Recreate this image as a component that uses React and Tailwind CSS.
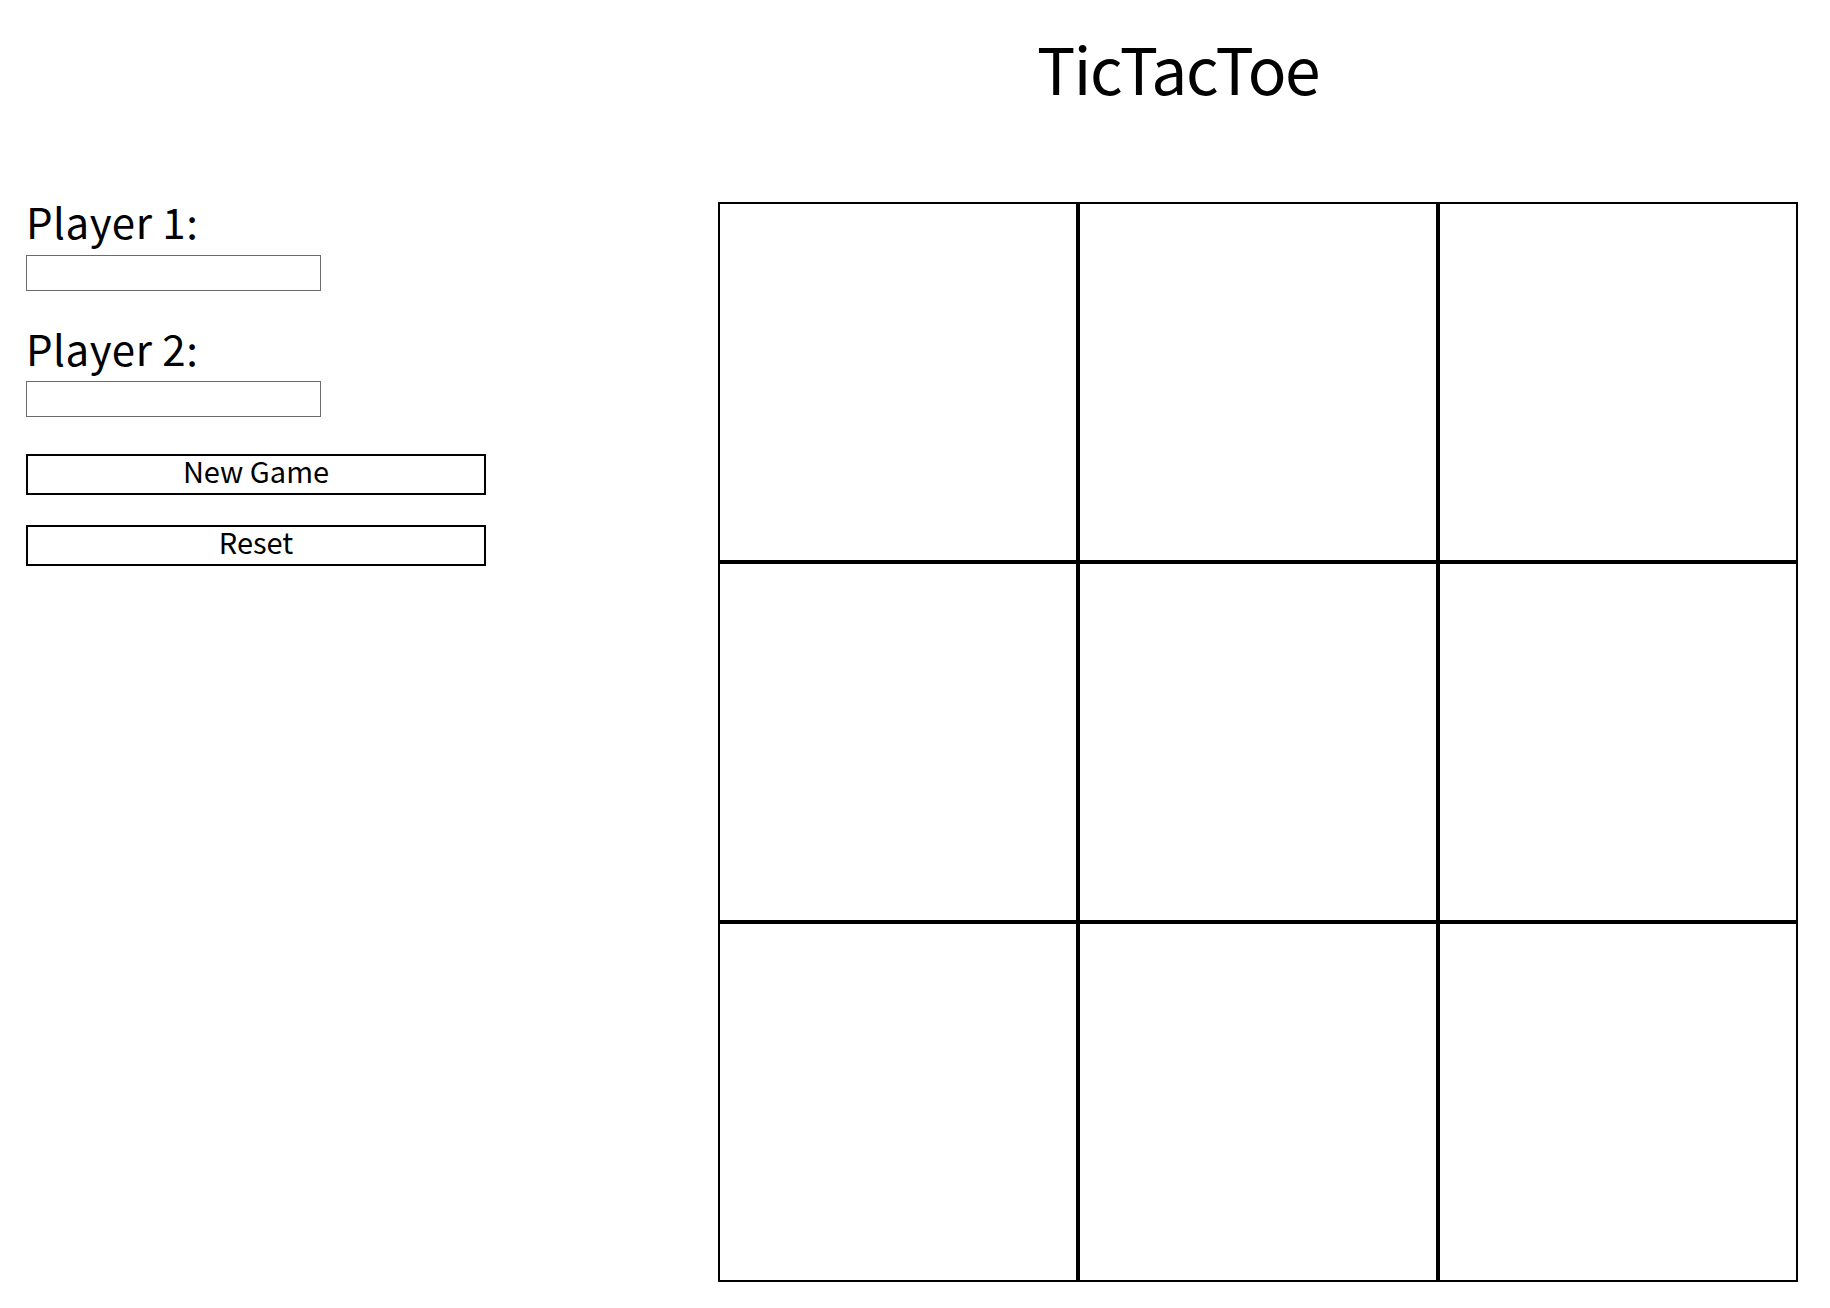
import React, { useState } from 'react';

const font = { fontFamily: '"Noto Sans CJK JP", "DejaVu Sans", sans-serif' };

const Cell = ({ value, onClick }) => (
  <button
    onClick={onClick}
    className="w-[360px] h-[360px] border-2 border-black bg-white text-[200px] leading-none flex items-center justify-center"
  >
    {value}
  </button>
);

const App = () => {
  const [p1, setP1] = useState('');
  const [p2, setP2] = useState('');
  const [cells, setCells] = useState(Array(9).fill(''));
  const [turn, setTurn] = useState('X');

  const play = (i) => {
    if (cells[i]) return;
    const next = [...cells];
    next[i] = turn;
    setCells(next);
    setTurn(turn === 'X' ? 'O' : 'X');
  };

  const reset = () => {
    setCells(Array(9).fill(''));
    setTurn('X');
  };

  const newGame = () => {
    reset();
    setP1('');
    setP2('');
  };

  return (
    <div className="min-h-screen bg-white text-black" style={font}>
      <header className="flex justify-center pl-[526px] pt-[35px]">
        <h1 className="text-[64px] leading-[64px] tracking-[-1.5px]">TicTacToe</h1>
      </header>

      <main className="flex pt-[103px]">
        <div className="w-[718px] pl-[26px] flex flex-col items-start -mt-[2px]">
          <label className="text-[42px] leading-[42px] tracking-[0.5px]">Player 1:</label>
          <input
            value={p1}
            onChange={(e) => setP1(e.target.value)}
            className="w-[295px] h-[36px] border border-[#6b6b6b] mt-[13px] px-1 text-[20px]"
          />
          <label className="text-[42px] leading-[42px] tracking-[0.5px] mt-[36px]">Player 2:</label>
          <input
            value={p2}
            onChange={(e) => setP2(e.target.value)}
            className="w-[295px] h-[36px] border border-[#6b6b6b] mt-[12px] px-1 text-[20px]"
          />
          <button
            onClick={newGame}
            className="w-[460px] h-[41px] border-2 border-black mt-[37px] text-[29px] leading-[29px] pb-[8px]"
          >
            New Game
          </button>
          <button
            onClick={reset}
            className="w-[460px] h-[41px] border-2 border-black mt-[30px] text-[29px] leading-[29px] pb-[8px]"
          >
            Reset
          </button>
        </div>

        <div className="grid grid-cols-[repeat(3,360px)]">
          {cells.map((c, i) => (
            <Cell key={i} value={c} onClick={() => play(i)} />
          ))}
        </div>
      </main>
    </div>
  );
};

export default App;
